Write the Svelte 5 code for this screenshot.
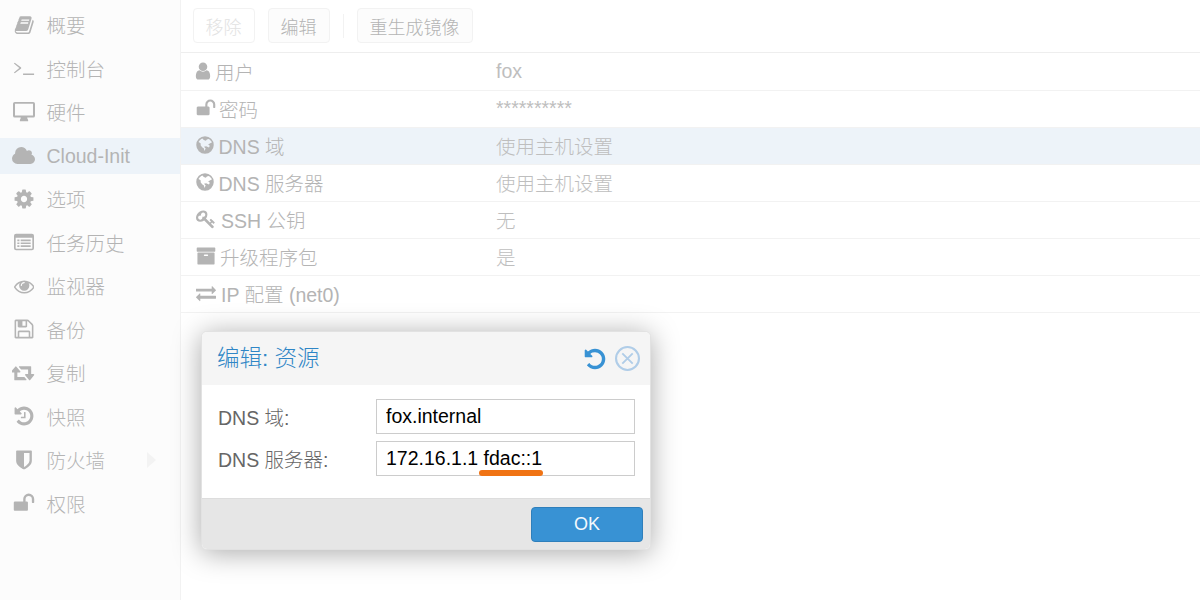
<script>
	const icons = {
		book: ["0 0 1792 1792", "M1703 478q40 57 18 129l-275 906q-19 64-76.5 107.5t-122.5 43.5h-923q-77 0-148.5-53.5t-99.5-131.5q-24-67-2-127 0-4 3-27t4-37q1-8-3-21.5t-3-19.5q2-11 8-21t16.5-23.5 16.5-23.5q23-38 45-91.5t30-91.5q3-10 .5-30t-.5-28q3-11 17-28t17-23q21-36 42-92t25-90q1-9-2.5-32t.5-28q4-13 22-30.5t22-22.5q19-26 42.5-84.5t27.5-96.5q1-8-3-25.5t-2-26.5q2-8 9-18t18-23 17-21q8-12 16.5-35.5t15-45 17-46.5 22-37 30.5-16.5 41 5.5l-1 3q42-10 57-10h761q74 0 114 56t18 130l-274 906q-36 119-71.5 153.5t-128.5 34.5h-869q-27 0-38 15-11 16-1 43 24 70 144 70h923q29 0 56-15.5t35-41.5l300-987q7-22 5-57 38 15 59 43zm-1064 2q-4 13 2 22.5t20 9.5h608q13 0 25.5-9.5t16.5-22.5l21-64q4-13-2-22.5t-20-9.5h-608q-13 0-25.5 9.5t-16.5 22.5zm-83 256q-4 13 2 22.5t20 9.5h608q13 0 25.5-9.5t16.5-22.5l21-64q4-13-2-22.5t-20-9.5h-608q-13 0-25.5 9.5t-16.5 22.5z"],
		terminal: ["0 0 24 24", "M1 7.2l.9-1 7 5.3v1l-7 5.3-.9-1 5.9-4.8zM11 18h12v1.5H11z"],
		desktop: ["0 0 24 24", "M2 1h20a2 2 0 0 1 2 2v13a2 2 0 0 1-2 2h-6.5c0 1.4.8 2 1 2.600v1.400H7.500v-1.400c.2-.6 1-1.200 1-2.600H2a2 2 0 0 1-2-2V3a2 2 0 0 1 2-2zm.2 2v12.800h19.600V3z"],
		cloud: ["0 0 1920 1792", "M1920 1216q0 159-112.5 271.500t-271.500 112.500h-1088q-185 0-316.500-131.500t-131.500-316.500q0-132 71-241.500t187-163.500q-2-28-2-43 0-212 150-362t362-150q158 0 286.500 88t187.500 230q70-62 166-62 106 0 181 75t75 181q0 75-41 138 129 30 213 134.500t84 239.500z"],
		cog: ["0 0 1792 1792", "M1152 896q0-106-75-181t-181-75-181 75-75 181 75 181 181 75 181-75 75-181zm512-109v222q0 12-8 23t-20 13l-185 28q-19 54-39 91 35 50 107 138 10 12 10 25t-9 23q-27 37-99 108t-94 71q-12 0-26-9l-138-108q-44 23-91 38-16 136-29 186-7 28-36 28h-222q-14 0-24.500-8.500t-11.500-21.500l-28-184q-49-16-90-37l-141 107q-10 9-25 9-14 0-25-11-126-114-165-168-7-10-7-23 0-12 8-23 15-21 51-66.500t54-70.500q-27-50-41-99l-183-27q-13-2-21-12.500t-8-23.500v-222q0-12 8-23t19-13l186-28q14-46 39-92-40-57-107-138-10-12-10-24 0-10 9-23 26-36 98.500-107.500t94.500-71.500q13 0 26 10l138 107q44-23 91-38 16-136 29-186 7-28 36-28h222q14 0 24.500 8.500t11.500 21.500l28 184q49 16 90 37l142-107q9-9 24-9 13 0 25 10 129 119 165 170 7 8 7 22 0 12-8 23-15 21-51 66.500t-54 70.500q26 50 41 98l183 28q13 2 21 12.500t8 23.500z"],
		list: ["0 0 24 24", "M2.500 2h19A2.500 2.500 0 0 1 24 4.500v15a2.500 2.500 0 0 1-2.500 2.500h-19A2.500 2.500 0 0 1 0 19.500v-15A2.500 2.500 0 0 1 2.500 2zM2 7v12.500c0 .3.2.5.5.5h19c.3 0 .5-.2.5-.5V7zm2 2h2.500v2H4zm4 0h12v2H8zm-4 3.500h2.500v2H4zm4 0h12v2H8zM4 16h2.500v2H4zm4 0h12v2H8z"],
		eye: ["0 0 1792 1792", "M1664 960q-152-236-381-353 61 104 61 225 0 185-131.500 316.500t-316.500 131.500-316.500-131.500-131.500-316.500q0-121 61-225-229 117-381 353 133 205 333.500 326.500t434.500 121.500 434.500-121.500 333.500-326.500zm-720-384q0-20-14-34t-34-14q-125 0-214.500 89.500t-89.500 214.500q0 20 14 34t34 14 34-14 14-34q0-86 61-147t147-61q20 0 34-14t14-34zm848 384q0 34-20 69-140 230-376.500 368.500t-499.500 138.500-499.500-139-376.500-368q-20-35-20-69t20-69q140-229 376.500-368t499.500-139 499.500 139 376.500 368q20 35 20 69z"],
		save: ["0 0 1792 1792", "M512 1536h768v-384h-768v384zm896 0h128v-896q0-14-10-38.500t-20-34.500l-281-281q-10-10-34-20t-39-10v416q0 40-28 68t-68 28h-576q-40 0-68-28t-28-68v-416h-128v1280h128v-416q0-40 28-68t68-28h832q40 0 68 28t28 68v416zm-384-928v-320q0-13-9.500-22.500t-22.500-9.500h-192q-13 0-22.500 9.500t-9.500 22.500v320q0 13 9.500 22.500t22.500 9.500h192q13 0 22.500-9.500t9.500-22.500zm640 32v928q0 40-28 68t-68 28h-1344q-40 0-68-28t-28-68v-1344q0-40 28-68t68-28h928q40 0 88 20t76 48l280 280q28 28 48 76t20 88z"],
		retweet: ["0 0 1920 1792", "M1216 1504q0 13-9.500 22.500t-22.500 9.500h-960q-8 0-13.500-2t-9-7-5.500-8.500-3-11.500-1-11.500v-600h-192q-26 0-45-19t-19-45q0-24 15-41l320-384q19-22 49-22t49 22l320 384q15 17 15 41 0 26-19 45t-45 19h-192v384h576q16 0 25 11l160 192q7 10 7 21zm640-416q0 24-15 41l-320 384q-20 23-49 23t-49-23l-320-384q-15-17-15-41 0-26 19-45t45-19h192v-384h-576q-16 0-25-12l-160-192q-7-9-7-20 0-13 9.500-22.500t22.500-9.500h960q8 0 13.500 2t9 7 5.500 8.500 3 11.500 1 11.500v600h192q26 0 45 19t19 45z"],
		history: ["0 0 1792 1792", "M1664 896q0 156-61 298t-164 245-245 164-298 61q-172 0-327-72.500t-264-204.500q-7-10-6.500-22.500t8.500-20.500l137-138q10-9 25-9 16 2 23 12 73 95 179 147t225 52q104 0 198.500-40.500t163.500-109.500 109.500-163.500 40.500-198.500-40.500-198.500-109.500-163.500-163.500-109.500-198.500-40.500q-98 0-188 35.500t-160 101.500l137 138q31 30 14 69-17 40-59 40h-448q-26 0-45-19t-19-45v-448q0-42 40-59 39-17 69 14l130 129q107-101 244.500-156.500t284.500-55.500q156 0 298 61t245 164 164 245 61 298zm-640-288v448q0 14-9 23t-23 9h-320q-14 0-23-9t-9-23v-64q0-14 9-23t23-9h224v-352q0-14 9-23t23-9h64q14 0 23 9t9 23z"],
		shield: ["0 0 1792 1792", "M1344 960v-640h-448v1137q119-63 213-137 235-184 235-360zm192-768v768q0 86-33.500 170.500t-83 150-118 127.500-126.500 103-121 77.500-89.500 49.500-42.500 20q-12 6-26 6t-26-6q-16-7-42.500-20t-89.500-49.500-121-77.500-126.500-103-118-127.500-83-150-33.500-170.500v-768q0-26 19-45t45-19h1152q26 0 45 19t19 45z"],
		unlock: ["0 0 1792 1792", "M1728 576v256q0 26-19 45t-45 19h-64q-26 0-45-19t-19-45v-256q0-106-75-181t-181-75-181 75-75 181v192h96q40 0 68 28t28 68v576q0 40-28 68t-68 28h-960q-40 0-68-28t-28-68v-576q0-40 28-68t68-28h672v-192q0-185 131.500-316.500t316.500-131.500 316.500 131.500 131.500 316.500z"],
		user: ["0 0 1792 1792", "M1536 1399q0 109-62.500 187t-150.500 78h-854q-88 0-150.500-78t-62.500-187q0-85 8.500-160.500t31.500-152 58.500-131 94-89 134.500-34.500q131 128 313 128t313-128q76 0 134.500 34.500t94 89 58.500 131 31.500 152 8.500 160.500zm-256-887q0 159-112.500 271.500t-271.500 112.500-271.500-112.500-112.500-271.500 112.500-271.500 271.500-112.500 271.500 112.500 112.500 271.500z"],
		globe: ["0 0 24 24", "M12 1.500a10.500 10.500 0 1 1 0 21 10.500 10.500 0 0 1 0-21zM9 4.200c-2.200.8-3.800 2.300-4.800 4.300l2.500 1.500.2 2.500 2 2.400 1.800 1.200.6 3 1.500-2.800-2-2.300 2.500-.5 3.500 1.500 1-2-2-1.500 3-2 1.500-.5c-.8-1.800-2.300-3.300-4-4.100l-2 .6-1.300 1.300L10.500 6z"],
		key: ["0 0 1792 1792", "M832 512q0-80-56-136t-136-56-136 56-56 136q0 42 19 83-41-19-83-19-80 0-136 56t-56 136 56 136 136 56 136-56 56-136q0-42-19-83 41 19 83 19 80 0 136-56t56-136zm851 704q0 17-49 66t-66 49q-9 0-28.500-16t-36.500-33-38.500-40-24.500-26l-96 96 220 220q28 28 28 68 0 42-39 81t-81 39q-40 0-68-28l-671-671q-176 131-365 131-163 0-265.500-102.500t-102.500-265.500q0-160 95-313t248-248 313-95q163 0 265.500 102.500t102.500 265.500q0 189-131 365l355 355 96-96q-3-3-26-24.500t-40-38.500-33-36.500-16-28.500q0-17 49-66t66-49q13 0 23 10 6 6 46 44.500t82 79.500 86.500 86 73 78 28.500 41z"],
		archive: ["0 0 1792 1792", "M1088 832q0-26-19-45t-45-19h-256q-26 0-45 19t-19 45 19 45 45 19h256q26 0 45-19t19-45zm576-192v960q0 26-19 45t-45 19h-1408q-26 0-45-19t-19-45v-960q0-26 19-45t45-19h1408q26 0 45 19t19 45zm64-448v256q0 26-19 45t-45 19h-1536q-26 0-45-19t-19-45v-256q0-26 19-45t45-19h1536q26 0 45 19t19 45z"],
		exchange: ["0 0 1792 1792", "M1792 1184v192q0 13-9.500 22.500t-22.500 9.500h-1376v192q0 13-9.500 22.500t-22.500 9.500q-12 0-24-10l-319-320q-9-9-9-22 0-14 9-23l320-320q9-9 23-9 13 0 22.500 9.500t9.500 22.500v192h1376q13 0 22.500 9.500t9.500 22.500zm0-544q0 14-9 23l-320 320q-9 9-23 9-13 0-22.500-9.500t-9.500-22.500v-192h-1376q-13 0-22.500-9.500t-9.500-22.500v-192q0-13 9.500-22.500t22.500-9.500h1376v-192q0-14 9-23t23-9q12 0 24 10l319 319q9 9 9 23z"],
		undo: ["0 0 1792 1792", "M1664 896q0 156-61 298t-164 245-245 164-298 61q-172 0-327-72.500t-264-204.500q-7-10-6.500-22.500t8.500-20.500l137-138q10-9 25-9 16 2 23 12 73 95 179 147t225 52q104 0 198.500-40.500t163.500-109.500 109.500-163.500 40.500-198.500-40.500-198.500-109.500-163.500-163.500-109.500-198.500-40.500q-98 0-188 35.500t-160 101.500l137 138q31 30 14 69-17 40-59 40h-448q-26 0-45-19t-19-45v-448q0-42 40-59 39-17 69 14l130 129q107-101 244.500-156.500t284.500-55.500q156 0 298 61t245 164 164 245 61 298z"]
	};

	const menu = [
		{ icon: "book", label: "概要" },
		{ icon: "terminal", label: "控制台" },
		{ icon: "desktop", label: "硬件" },
		{ icon: "cloud", label: "Cloud-Init", active: true },
		{ icon: "cog", label: "选项" },
		{ icon: "list", label: "任务历史" },
		{ icon: "eye", label: "监视器" },
		{ icon: "save", label: "备份" },
		{ icon: "retweet", label: "复制" },
		{ icon: "history", label: "快照" },
		{ icon: "shield", label: "防火墙", more: true },
		{ icon: "unlock", label: "权限" }
	];

	const rows = [
		{ icon: "user", label: "用户", value: "fox" },
		{ icon: "unlock", label: "密码", value: "**********" },
		{ icon: "globe", label: "DNS 域", value: "使用主机设置", selected: true },
		{ icon: "globe", label: "DNS 服务器", value: "使用主机设置" },
		{ icon: "key", label: "SSH 公钥", value: "无" },
		{ icon: "archive", label: "升级程序包", value: "是" },
		{ icon: "exchange", label: "IP 配置 (net0)", value: "" }
	];
</script>

{#snippet icon(name, cls)}
	<svg class={cls} viewBox={icons[name][0]} fill="currentColor" fill-rule="evenodd" aria-hidden="true"><path d={icons[name][1]} /></svg>
{/snippet}

<div class="page">
	<nav class="sidebar">
		{#each menu as item}
			<div class="menuItem" class:active={item.active}>
				<span class="menuIcon">{@render icon(item.icon, "mi-" + item.icon)}</span>
				<span class="menuLabel">{item.label}</span>
				{#if item.more}<span class="arrow"></span>{/if}
			</div>
		{/each}
	</nav>

	<main class="content">
		<div class="toolbar">
			<button class="tbtn disabled">移除</button>
			<button class="tbtn">编辑</button>
			<span class="sep"></span>
			<button class="tbtn">重生成镜像</button>
		</div>
		{#each rows as row}
			<div class="row" class:selected={row.selected}>
				<div class="key">
					{@render icon(row.icon, "ri-" + row.icon)}
					<span>{row.label}</span>
				</div>
				<div class="val">{row.value}</div>
			</div>
		{/each}
	</main>

	<div class="dialog">
		<header>
			<h2>编辑: 资源</h2>
			<div class="tools">
				{@render icon("undo", "undo")}
				<svg class="close" viewBox="0 0 24 24" fill="none" stroke="currentColor" aria-hidden="true">
					<circle cx="12" cy="12" r="11" stroke-width="2" />
					<path d="M7 7l10 10M17 7L7 17" stroke-width="1.800" />
				</svg>
			</div>
		</header>
		<div class="form">
			<label class="field">
				<span>DNS 域:</span>
				<input value="fox.internal" />
			</label>
			<label class="field">
				<span>DNS 服务器:</span>
				<span class="inputWrap">
					<input value="172.16.1.1 fdac::1" />
					<i class="mark"></i>
				</span>
			</label>
		</div>
		<footer>
			<button class="ok">OK</button>
		</footer>
	</div>
</div>

<style>
	:global(body) {
		background: #fff;
	}

	.page {
		--font: "Liberation Sans", "Noto Sans CJK SC", sans-serif;
		position: relative;
		display: flex;
		width: 1200px;
		height: 600px;
		overflow: hidden;
		font-family: var(--font);
		font-weight: 300;
		color: #b4b4b4;
		background: #fff;
	}

	.sidebar {
		flex: 0 0 181px;
		box-sizing: border-box;
		padding-top: 3px;
		background: #fcfcfc;
		border-right: 1px solid #f2f2f2;
	}

	.menuItem {
		display: flex;
		align-items: center;
		height: 43.500px;
		font-size: 19.500px;
		position: relative;
	}

	.menuItem.active::before {
		content: "";
		position: absolute;
		left: 0;
		right: 0;
		top: 4px;
		height: 36px;
		background: #edf3f9;
	}

	.menuIcon {
		position: relative;
		flex: 0 0 46.500px;
		display: flex;
		justify-content: center;
		box-sizing: border-box;
		padding-left: 1px;
		color: #b4b4b4;
	}

	.menuIcon svg {
		width: 22px;
		height: 22px;
	}

	.menuIcon .mi-cloud,
	.menuIcon .mi-retweet {
		width: 23px;
		height: 23px;
	}

	.menuIcon .mi-eye,
	.menuIcon .mi-book {
		width: 20.500px;
		height: 20.500px;
	}

	.menuIcon .mi-list {
		width: 20px;
		height: 20px;
	}

	.menuLabel {
		position: relative;
	}

	.active .menuLabel {
		top: 1px;
	}

	.arrow {
		position: absolute;
		left: 147px;
		top: 14px;
		border-left: 9px solid #f3f3f3;
		border-top: 8px solid transparent;
		border-bottom: 8px solid transparent;
	}

	.content {
		flex: 1;
	}

	.toolbar {
		display: flex;
		align-items: center;
		gap: 13px;
		height: 53px;
		box-sizing: border-box;
		padding: 0 12px 1px;
		border-bottom: 1px solid #eee;
	}

	.tbtn {
		height: 35px;
		padding: 0 12.500px 0 11.500px;
		font: 300 18px var(--font);
		color: #b4b4b4;
		background: #fcfcfc;
		border: 1px solid #f2f2f2;
		border-radius: 4px;
	}

	.tbtn.disabled {
		color: #e2e2e2;
		background: #fff;
	}

	.sep {
		width: 1px;
		height: 24px;
		background: #f2f2f2;
	}

	.row {
		display: flex;
		align-items: center;
		box-sizing: border-box;
		height: 37px;
		border-bottom: 1px solid #f2f2f2;
		font-size: 19.500px;
		padding: 0 0 2px 15px;
	}

	.toolbar + .row {
		height: 38px;
		padding-bottom: 1px;
	}

	.row.selected {
		background: #edf3f9;
	}

	.key {
		width: 300px;
		display: flex;
		align-items: center;
	}

	.key svg {
		flex: none;
		width: 20px;
		height: 20px;
		color: #b4b4b4;
	}

	.key .ri-user {
		margin: 0 2px 0 -3px;
	}

	.key .ri-unlock {
		margin-right: 3px;
	}

	.key .ri-globe {
		margin: 0 3.500px 0 -1px;
	}

	.key .ri-key {
		margin-right: 5px;
	}

	.key .ri-archive {
		margin-right: 4px;
	}

	.key .ri-exchange {
		margin-right: 5px;
	}

	.val {
		color: #bebebe;
	}

	.dialog {
		position: absolute;
		left: 201px;
		top: 331px;
		width: 450px;
		height: 219px;
		box-sizing: border-box;
		display: flex;
		flex-direction: column;
		border: 1px solid #e2e2e2;
		border-radius: 6px;
		background: #fff;
		overflow: hidden;
		box-shadow: 0 3px 28px rgba(0, 0, 0, 0.34);
	}

	.dialog header {
		flex: 0 0 53px;
		display: flex;
		align-items: center;
		justify-content: space-between;
		padding: 0 10px 0 15px;
		background: #f5f5f5;
	}

	h2 {
		margin: 0 0 5px;
		font-size: 22.500px;
		font-weight: 300;
		color: #2f86c6;
	}

	.tools {
		display: flex;
		align-items: center;
		gap: 8px;
	}

	.tools svg {
		display: block;
	}

	.undo {
		width: 24px;
		height: 24px;
		color: #3892d4;
	}

	.close {
		width: 25px;
		height: 25px;
		color: #b0cde8;
	}

	.form {
		flex: 1;
		padding: 14px 15px 0 16px;
		display: flex;
		flex-direction: column;
		gap: 7px;
	}

	.field {
		display: flex;
		align-items: center;
		font-size: 19.500px;
		color: #666;
	}

	.field > span:first-child {
		flex: 0 0 158px;
	}

	.inputWrap {
		position: relative;
		display: block;
	}

	input {
		display: block;
		box-sizing: border-box;
		width: 259px;
		height: 35px;
		padding: 0 9px;
		font: 19.500px var(--font);
		color: #000;
		border: 1px solid #ccc;
		border-radius: 0;
		outline: none;
	}

	.mark {
		position: absolute;
		left: 103px;
		top: 29px;
		width: 64px;
		height: 6px;
		border-radius: 3px;
		background: #f07314;
	}

	footer {
		flex: 0 0 51px;
		display: flex;
		justify-content: flex-end;
		align-items: flex-start;
		padding: 8px 7px 0 0;
		box-sizing: border-box;
		background: #e6e6e6;
		border-top: 1px solid #ddd;
	}

	.ok {
		width: 112px;
		height: 35px;
		font: 18px var(--font);
		color: #f4f9fd;
		background: #3892d4;
		border: 1px solid #2f7fbb;
		border-radius: 4px;
	}
</style>
